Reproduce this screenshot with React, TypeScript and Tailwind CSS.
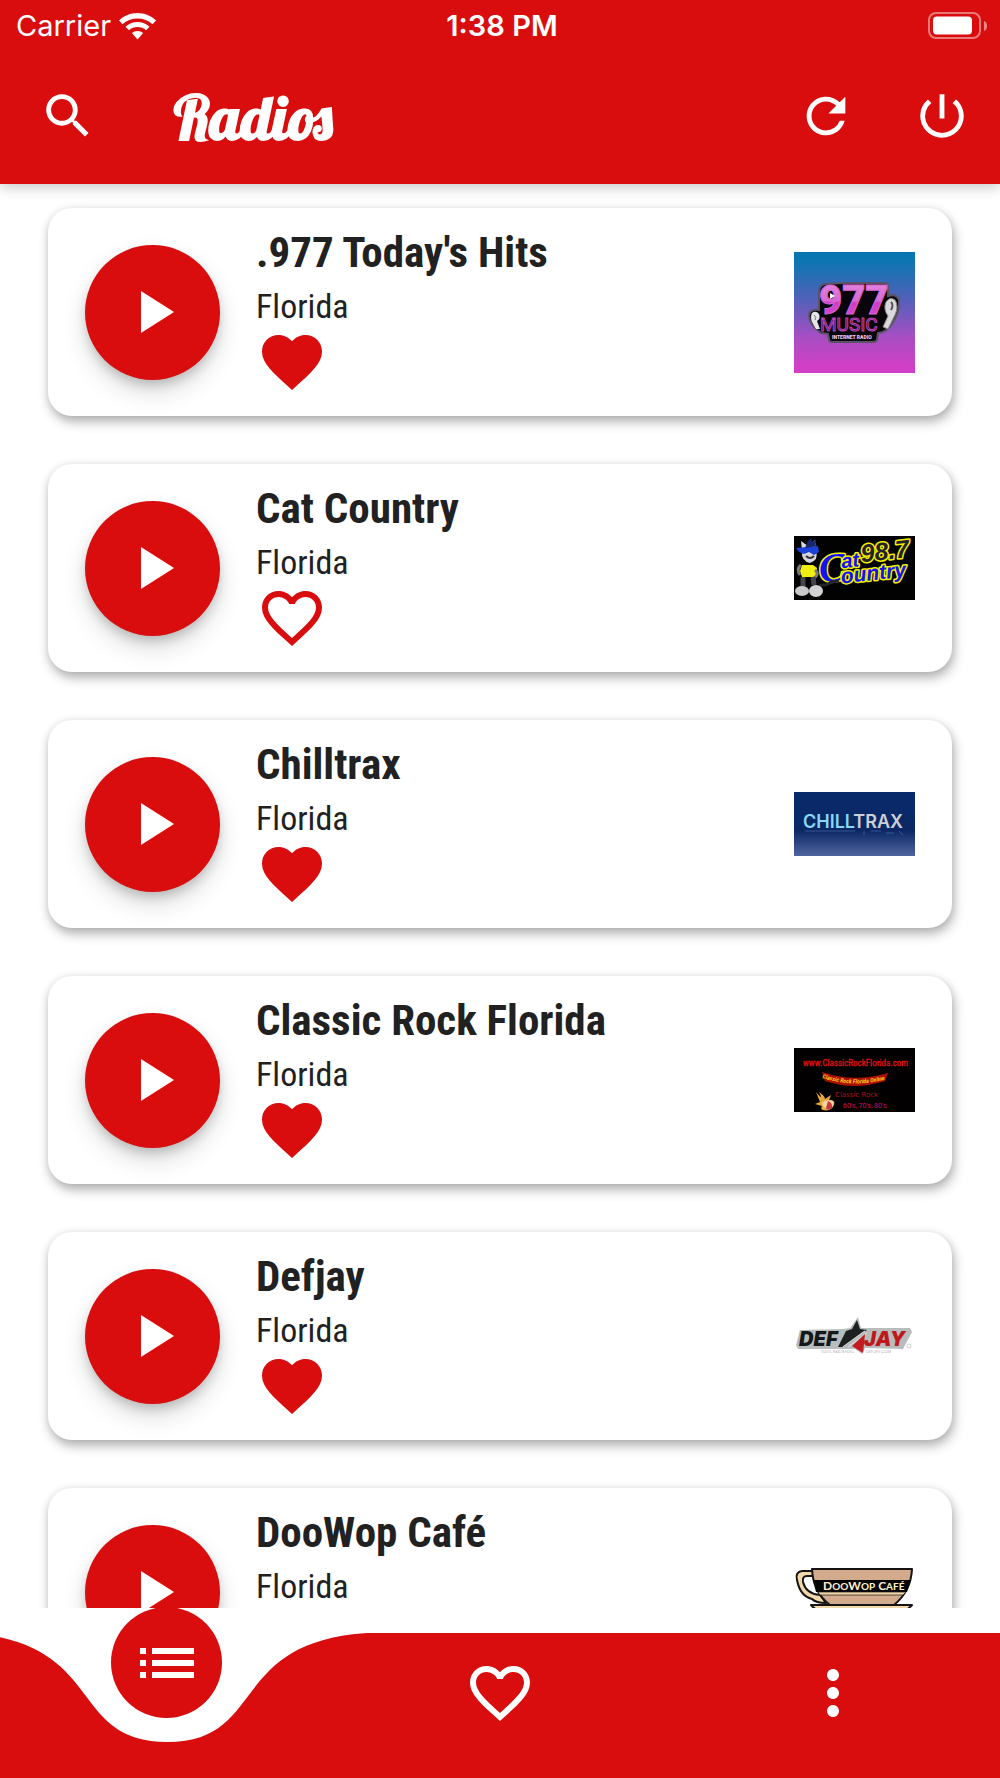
import type { ComponentType } from "react";
import {
  MdFavorite,
  MdFavoriteBorder,
  MdList,
  MdMoreVert,
  MdPlayArrow,
  MdPowerSettingsNew,
  MdRefresh,
  MdSearch,
} from "react-icons/md";

interface Station {
  name: string;
  region: string;
  favorite: boolean;
  Logo: ComponentType;
}

function Music977Logo() {
  return (
    <svg viewBox="0 0 121 121" className="w-full" role="img" aria-label="977 Music">
      <defs>
        <linearGradient id="m-bg" x1="0" y1="0" x2="0" y2="1">
          <stop offset="0.05" stopColor="#0877b1" />
          <stop offset="0.35" stopColor="#4763b8" />
          <stop offset="0.7" stopColor="#a64ec3" />
          <stop offset="0.95" stopColor="#d23fc6" />
        </linearGradient>
        <linearGradient id="m-num" x1="0" y1="0" x2="0" y2="1">
          <stop offset="0" stopColor="#e58be0" />
          <stop offset="0.5" stopColor="#d76bd2" />
          <stop offset="0.55" stopColor="#cb3fc6" />
          <stop offset="1" stopColor="#d94fd3" />
        </linearGradient>
      </defs>
      <rect width="121" height="121" fill="url(#m-bg)" />
      <path
        d="M31 32 L50 31 L91 31 Q94 31 94 35 L94 44 Q102 41 105 48 Q106 60 99 70 Q93 81 84 81 L83 88 Q82 90 79 90 L38 90 Q35 90 35 87 L34 82 L27 81 Q15 73 15 63 Q16 57 25 58 L25 40 Q25 33 31 32Z"
        fill="#08060a"
        stroke="#5b5365"
        strokeWidth="2"
      />
      <text x="25" y="62" fontSize="40" fontWeight="900" fontFamily="Roboto, sans-serif" fill="url(#m-num)" stroke="#d965d4" strokeWidth="1">
        977
      </text>
      <path d="M36 41 l5 3 l-5 3z" fill="#fff" />
      <text x="26" y="79" fontSize="19" fontFamily="Roboto, sans-serif" fill="#210b22" stroke="#c042bd" strokeWidth="1">
        MUSIC
      </text>
      <text x="38" y="87" fontSize="5" fontWeight="900" fontFamily="Roboto, sans-serif" fill="#f5c7ef">
        INTERNET RADIO
      </text>
      <path d="M92 50 Q96 44 101 48 Q105 54 101 63 L94 77 L89 75 L94 64 Q89 57 92 50Z" fill="#d9d9dc" stroke="#88858c" />
      <path d="M97 50 q3 3 0 8" fill="none" stroke="#55525a" strokeWidth="2" />
      <path d="M18 61 Q22 58 25 62 Q27 67 23 69 L26 77 L22 77 L18 70 Q16 65 18 61Z" fill="#e6e6e8" />
      <path d="M20 63 q3 2 1 5" fill="none" stroke="#77747c" />
    </svg>
  );
}

function CatCountryLogo() {
  return (
    <svg viewBox="0 0 121 64" className="w-full" role="img" aria-label="Cat Country 98.7">
      <rect width="121" height="64" fill="#020202" />
      <g
        fontFamily="'Liberation Sans', sans-serif"
        fontWeight="700"
        fontStyle="italic"
        stroke="#f5f000"
        strokeWidth="3"
        strokeLinejoin="round"
        paintOrder="stroke"
        transform="rotate(-6 60 32)"
      >
        <text x="68" y="27" fontSize="25" fill="#24222a">
          98.7
        </text>
        <text x="25" y="43" fontSize="40" fill="#1212f5" fontFamily="'Liberation Serif', serif">
          C
        </text>
        <text x="48" y="31" fontSize="20" fill="#1212f5">
          at
        </text>
        <text x="46" y="46" fontSize="21" fill="#1212f5">
          ountry
        </text>
      </g>
      <path d="M8 15 L7 5 L14 10 L21 4 L22 15 Q25 24 16 27 Q7 25 8 15Z" fill="#d8d8dc" />
      <path d="M2 12 L24 10 L25 16 L20 19 L15 16 L10 18 L5 16Z" fill="#1a42d6" />
      <path d="M14 5 l3-3 l1 4 l4-2 l-1 5 l3 1 l-13 2z" fill="#17266e" />
      <path d="M12 20 q4 4 8 0" fill="none" stroke="#333" strokeWidth="2" />
      <path d="M8 29 L19 29 L23 32 L22 41 L8 41 L6 35Z" fill="#f3ee12" />
      <path d="M7 29 Q2 33 6 39 M21 34 Q26 38 20 42" fill="none" stroke="#77777d" strokeWidth="3" />
      <path d="M9 41 L9 50 M19 41 L20 49" stroke="#44444a" strokeWidth="5" />
      <path d="M25 49 Q33 50 37 46 L45 45" fill="none" stroke="#242428" strokeWidth="3" />
      <ellipse cx="8" cy="55" rx="7" ry="5" fill="#c9c9cc" />
      <ellipse cx="22" cy="55" rx="7" ry="6" fill="#d2d2d5" />
    </svg>
  );
}

function ChilltraxLogo() {
  return (
    <svg viewBox="0 0 121 64" className="w-full" role="img" aria-label="Chilltrax">
      <defs>
        <linearGradient id="c-bg" x1="0" y1="0" x2="0" y2="1">
          <stop offset="0" stopColor="#082a6b" />
          <stop offset="0.6" stopColor="#0b2865" />
          <stop offset="1" stopColor="#5065a0" />
        </linearGradient>
      </defs>
      <rect width="121" height="64" fill="url(#c-bg)" />
      <text x="9" y="36" fontFamily="Inter, sans-serif" fontWeight="600" fontSize="18" fill="#86d8f5">
        CHILL<tspan fill="#cccfd6">TRAX</tspan>
      </text>
      <path d="M11 39 H61 M70 39 v4 M77 39 h10 M92 41 h8 M105 39 l4 4" stroke="#8fc4e8" strokeOpacity="0.3" fill="none" />
    </svg>
  );
}

function ClassicRockLogo() {
  return (
    <svg viewBox="0 0 121 64" className="w-full" role="img" aria-label="Classic Rock Florida">
      <defs>
        <path id="arc" d="M28 30 Q62 41 97 30" />
      </defs>
      <rect width="121" height="64" fill="#020000" />
      <text x="9" y="18" fontSize="9" fontFamily="'Roboto Condensed', sans-serif" fill="#e01010" stroke="#e01010" strokeWidth="0.3">
        www.ClassicRockFlorida.com
      </text>
      <path d="M28 24 Q60 35 94 25 L91 33 Q60 43 31 33Z" fill="#a91000" />
      <text fontFamily="'Roboto Condensed', sans-serif" fontSize="6" fontWeight="700" fontStyle="italic" fill="#ffc51c">
        <textPath href="#arc">Classic Rock Florida Online</textPath>
      </text>
      <text x="41" y="49" fontSize="7" fontFamily="'DejaVu Sans', sans-serif" fill="#b50d1b">
        Classic Rock
      </text>
      <text x="49" y="60" fontSize="7" fontFamily="Roboto, sans-serif" fill="#cf0a62">
        60's, 70's, 80's
      </text>
      <path d="M22 44 Q30 54 25 44 Q31 48 31 51 L37 47 L35 52 Q42 52 40 57 Q37 64 29 62 Q26 61 28 58 L21 56 L26 54Z" fill="#e8a93c" />
      <path d="M28 55 Q33 50 39 53 Q41 60 33 61 Q29 60 28 55Z" fill="#f3d5a1" />
      <path d="M34 53 q5 2 4 7 q-5 3 -6 0z" fill="#c8383d" />
    </svg>
  );
}

function DefjayLogo() {
  return (
    <svg viewBox="0 0 121 42" className="w-full" role="img" aria-label="Defjay">
      <path d="M6 15 L49 14 L56 13 L64 2 L67 13 L116 13 L118 17 L109 34 L71 33 L68 39 L61 34 L4 34 L2 30Z" fill="#b9bcbc" />
      <path d="M52 16 L58 14 L63 5 L66 14 L73 15 L50 32 L44 32Z" fill="#1c2021" />
      <g fontFamily="Inter, sans-serif" fontSize="20" fontWeight="900" fontStyle="italic">
        <text x="5" y="31" fill="#141819">
          DEF
        </text>
        <text x="70" y="31" fill="#bf181c">
          JAY
        </text>
      </g>
      <path d="M49 32 L71 16 M54 32 L73 18" stroke="#d5d7d7" strokeWidth="1.5" />
      <path d="M71 19 L69 38 L58 31Z" fill="#c21c20" />
      <text x="27" y="38" fontSize="4" fontFamily="Inter, sans-serif" fill="#b4b4b4">
        100% R&amp;B RADIO
      </text>
      <text x="72" y="38" fontSize="4" fontFamily="Inter, sans-serif" fill="#b4b4b4">
        DEFJAY.COM
      </text>
      <circle cx="115" cy="31" r="2" fill="none" stroke="#bbb" strokeWidth="0.7" />
    </svg>
  );
}

function DooWopLogo() {
  return (
    <svg viewBox="0 0 121 50" className="w-full" role="img" aria-label="DooWop Café">
      <g stroke="#141414" strokeWidth="2" strokeLinejoin="round">
        <path
          d="M20 4 L8 4 Q1 5 3 13 Q6 29 18 32 Q22 36 32 36 L26 28 Q12 27 9 15 Q8 9 13 9 L20 9Z"
          fill="#f2d7a9"
        />
        <path d="M18 2 L118 2 Q117 24 100 38 L36 38 Q19 25 18 2Z" fill="#d2ab8d" />
        <path d="M17 38 L118 38 Q112 45 98 49 L38 49 Q23 45 17 38Z" fill="#f2d7a9" />
      </g>
      <path d="M19 13 H117 L113 25 H22Z" fill="#050505" />
      <path d="M24 25 H112 L109 28 H26Z" fill="#f2d7a9" stroke="#141414" strokeWidth="0.7" />
      <text x="29" y="23" fontSize="12" fontFamily="Lato, sans-serif" fontWeight="700" fill="#fff1cf">
        D<tspan fontSize="10">OO</tspan>W<tspan fontSize="10">OP</tspan> C<tspan fontSize="10">AFÉ</tspan>
      </text>
    </svg>
  );
}

const stations: Station[] = [
  { name: ".977 Today's Hits", region: "Florida", favorite: true, Logo: Music977Logo },
  { name: "Cat Country", region: "Florida", favorite: false, Logo: CatCountryLogo },
  { name: "Chilltrax", region: "Florida", favorite: true, Logo: ChilltraxLogo },
  { name: "Classic Rock Florida", region: "Florida", favorite: true, Logo: ClassicRockLogo },
  { name: "Defjay", region: "Florida", favorite: true, Logo: DefjayLogo },
  { name: "DooWop Café", region: "Florida", favorite: true, Logo: DooWopLogo },
];

function StatusBar() {
  return (
    <div className="grid h-12 grid-cols-3 items-center pt-1 pr-3 pl-4 font-[Inter,sans-serif] text-[29px] leading-8">
      <div className="flex items-center gap-2">
        <span>Carrier</span>
        <svg viewBox="0 0 37 27" className="w-[37px]" fill="currentColor" aria-hidden="true">
          <path d="M18.500 0 C11.500 0 5 2.700 0 7.500 L3.500 11.200 C7.500 7.400 12.800 5.400 18.500 5.400 C24.200 5.400 29.500 7.400 33.500 11.200 L37 7.500 C32 2.700 25.500 0 18.500 0Z" />
          <path d="M18.500 9 C13.800 9 9.700 10.700 6.500 13.800 L10 17.300 C12.300 15.200 15.300 14.100 18.500 14.100 C21.700 14.100 24.700 15.200 27 17.300 L30.500 13.800 C27.300 10.700 23.200 9 18.500 9Z" />
          <path d="M18.500 18 C16.300 18 14.400 18.700 12.900 20.100 L18.500 26.500 L24.100 20.100 C22.600 18.700 20.700 18 18.500 18Z" />
        </svg>
      </div>
      <span className="text-center font-semibold">1:38 PM</span>
      <svg viewBox="0 0 60 28" className="w-[60px] justify-self-end" aria-hidden="true">
        <rect x="1" y="1" width="51" height="25" rx="7" fill="none" stroke="#fff" strokeOpacity="0.45" strokeWidth="2" />
        <rect x="5" y="4.500" width="39" height="18" rx="4" fill="#fff" />
        <path d="M56 9 q3 1 3 5 q0 4 -3 5z" fill="#fff" fillOpacity="0.5" />
      </svg>
    </div>
  );
}

function StationCard({ station }: { station: Station }) {
  const { name, region, favorite, Logo } = station;
  const Heart = favorite ? MdFavorite : MdFavoriteBorder;

  return (
    <li className="flex h-52 shrink-0 items-center gap-9 rounded-3xl bg-white px-[37px] shadow-[2px_6px_12px_rgba(0,0,0,0.28),0_1px_8px_rgba(0,0,0,0.1)]">
      <button
        type="button"
        aria-label={`Play ${name}`}
        className="flex size-[135px] shrink-0 items-center justify-center rounded-full bg-[#d90d0d] text-white shadow-[0_6px_12px_-2px_rgba(0,0,0,0.2),0_12px_24px_rgba(0,0,0,0.14)]"
      >
        <MdPlayArrow size={72} />
      </button>
      <div className="flex min-w-0 flex-1 flex-col items-start">
        <h2 className="max-w-full truncate text-[43px] leading-[52px] font-bold">{name}</h2>
        <p className="mt-2 text-[34px] leading-10">{region}</p>
        <button type="button" aria-label={`Favorite ${name}`} aria-pressed={favorite} className="text-[#d90d0d]">
          <Heart size={72} />
        </button>
      </div>
      <div className="w-[121px] shrink-0">
        <Logo />
      </div>
    </li>
  );
}

function BottomNav() {
  return (
    <nav className="relative z-10 shrink-0 bg-white pt-[25px] text-white">
      <div className="grid h-[145px] grid-cols-3 bg-[#d90d0d]">
        <div className="relative flex justify-center">
          <svg viewBox="0 0 400 110" className="absolute -top-px left-1/2 w-[400px] max-w-none -translate-x-1/2" fill="#fff" aria-hidden="true">
            <path d="M0 0 V1 C140 10 100 110 200 110 C300 110 260 10 400 1 V0Z" />
          </svg>
          <button
            type="button"
            aria-label="Stations"
            aria-current="page"
            className="absolute -top-[26px] flex size-[111px] items-center justify-center rounded-full bg-[#d90d0d]"
          >
            <MdList size={72} />
          </button>
        </div>
        <button type="button" aria-label="Favorites" className="flex justify-center pt-6">
          <MdFavoriteBorder size={72} />
        </button>
        <button type="button" aria-label="More" className="flex justify-center pt-6">
          <MdMoreVert size={72} />
        </button>
      </div>
    </nav>
  );
}

export default function App() {
  return (
    <div className="flex h-screen flex-col overflow-hidden bg-white font-['Roboto_Condensed','Liberation_Sans_Narrow',sans-serif] text-[#212121]">
      <header className="relative z-10 shrink-0 bg-[#d90d0d] pb-px text-white shadow-[0_4px_12px_rgba(0,0,0,0.2)]">
        <StatusBar />
        <div className="flex h-[135px] items-center pr-[29px] pl-[39px]">
          <button type="button" aria-label="Search">
            <MdSearch size={58} />
          </button>
          <h1 className="ml-[77px] flex-1 pt-1 font-[Lobster,'Liberation_Serif',serif] text-[60px] leading-[64px] font-bold">
            Radios
          </h1>
          <div className="flex gap-[58px]">
            <button type="button" aria-label="Refresh">
              <MdRefresh size={58} />
            </button>
            <button type="button" aria-label="Power off">
              <MdPowerSettingsNew size={58} />
            </button>
          </div>
        </div>
      </header>

      <main className="min-h-0 flex-1 overflow-y-auto [scrollbar-width:none]">
        <ul className="flex flex-col gap-12 px-12 py-6">
          {stations.map((station) => (
            <StationCard key={station.name} station={station} />
          ))}
        </ul>
      </main>

      <BottomNav />
    </div>
  );
}
